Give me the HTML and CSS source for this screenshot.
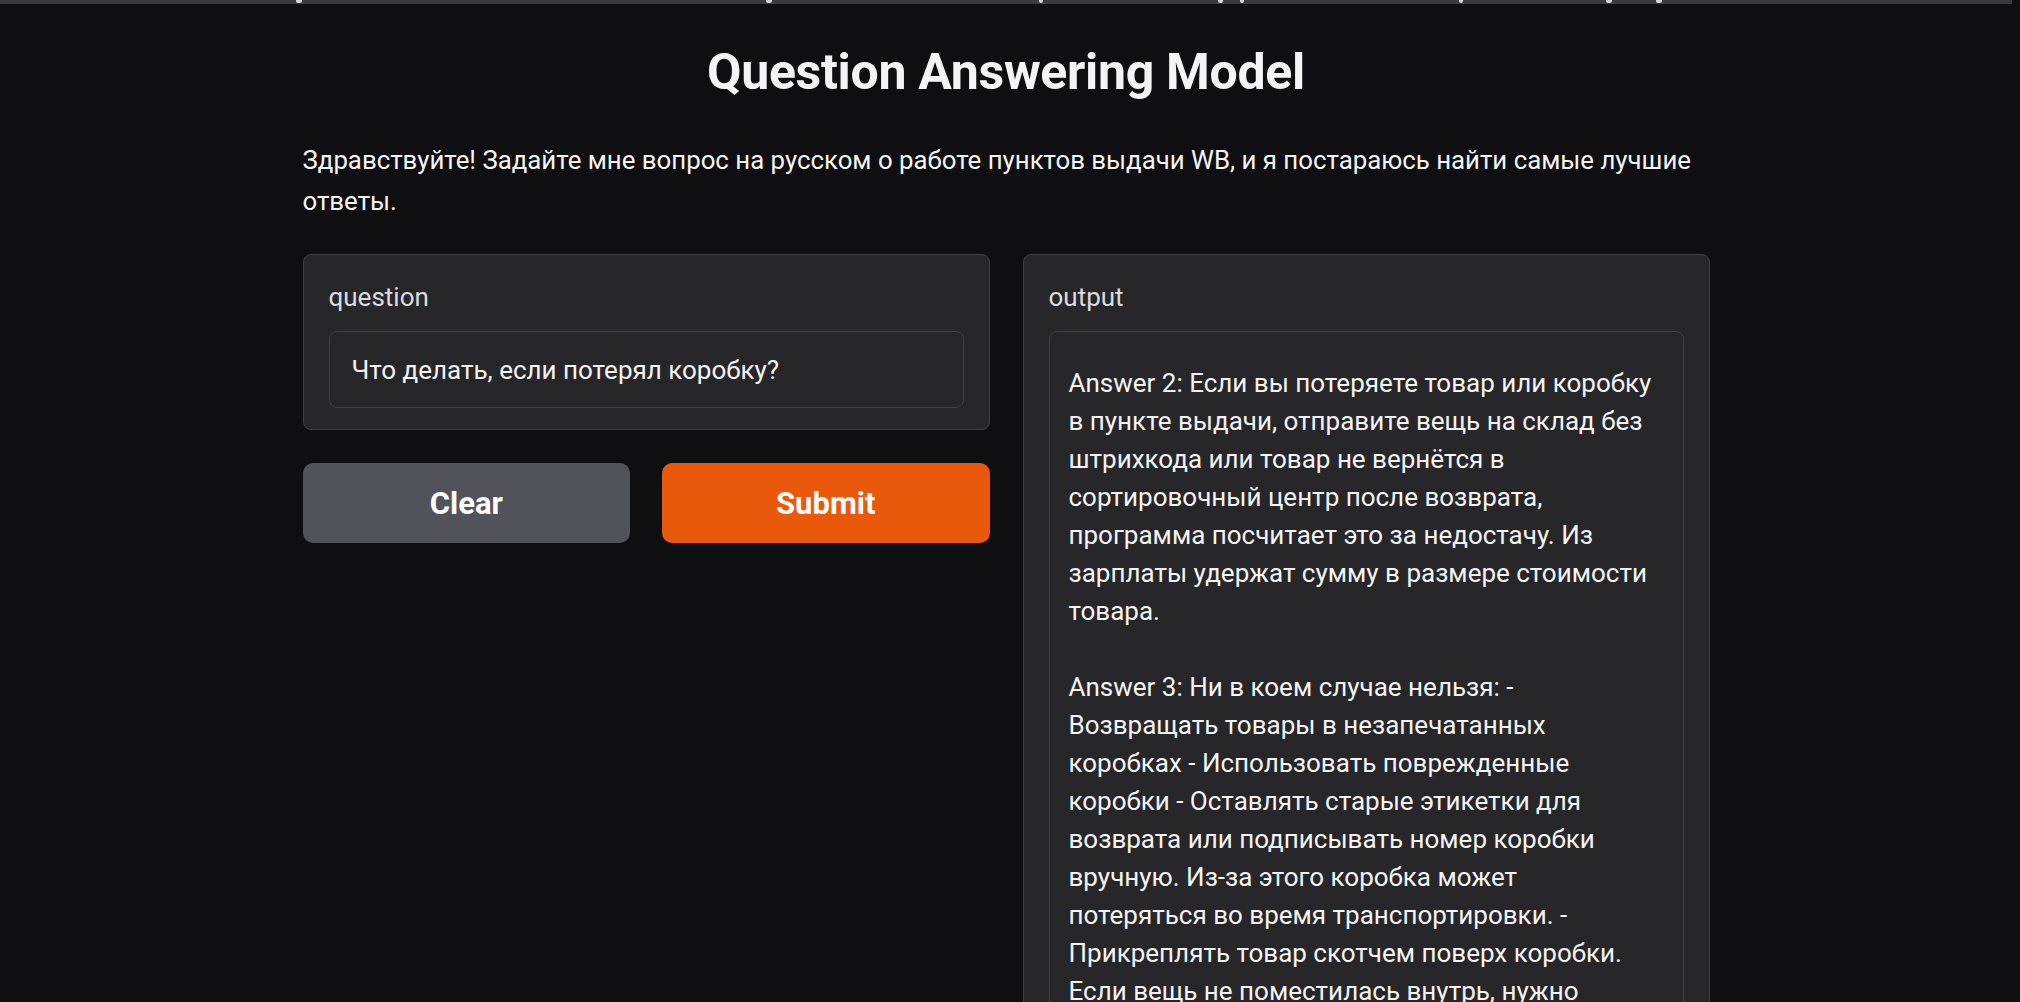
FILE: index.html
```html
<!DOCTYPE html>
<html lang="ru">
<head>
<meta charset="utf-8">
<title>Question Answering Model</title>
<link rel="stylesheet" href="styles.css">
</head>
<body>
<div class="topbar">
  <span class="mark m1"></span><span class="mark m2"></span><span class="mark m3"></span><span class="mark m4"></span><span class="mark m5"></span><span class="mark m6"></span><span class="mark m7"></span><span class="mark m8"></span>
</div>
<main class="app">
  <h1 class="title">Question Answering Model</h1>
  <p class="intro">Здравствуйте! Задайте мне вопрос на русском о работе пунктов выдачи WB, и я постараюсь найти самые лучшие ответы.</p>
  <div class="columns">
    <div class="col">
      <div class="card">
        <div class="label">question</div>
        <div class="input">Что делать, если потерял коробку?</div>
      </div>
      <div class="buttons">
        <button class="btn btn-clear">Clear</button>
        <button class="btn btn-submit">Submit</button>
      </div>
    </div>
    <div class="col">
      <div class="card card-out">
        <div class="label">output</div>
        <div class="output">
          <div class="line">Answer 2: Если вы потеряете товар или коробку</div>
          <div class="line">в пункте выдачи, отправите вещь на склад без</div>
          <div class="line">штрихкода или товар не вернётся в</div>
          <div class="line">сортировочный центр после возврата,</div>
          <div class="line">программа посчитает это за недостачу. Из</div>
          <div class="line">зарплаты удержат сумму в размере стоимости</div>
          <div class="line">товара.</div>
          <div class="line">&nbsp;</div>
          <div class="line">Answer 3: Ни в коем случае нельзя: -</div>
          <div class="line">Возвращать товары в незапечатанных</div>
          <div class="line">коробках - Использовать поврежденные</div>
          <div class="line">коробки - Оставлять старые этикетки для</div>
          <div class="line">возврата или подписывать номер коробки</div>
          <div class="line">вручную. Из-за этого коробка может</div>
          <div class="line">потеряться во время транспортировки. -</div>
          <div class="line">Прикреплять товар скотчем поверх коробки.</div>
          <div class="line">Если вещь не поместилась внутрь, нужно</div>
        </div>
      </div>
    </div>
  </div>
</main>
</body>
</html>
```
FILE: styles.css
```css
* { box-sizing: border-box; }
html, body { margin: 0; padding: 0; }
body {
  background: #0f0f11;
  color: #f4f4f5;
  font-family: Roboto, "Noto Sans", sans-serif;
  height: 1002px;
  overflow: hidden;
  padding-right: 8px;
}
.topbar {
  height: 4px;
  background: #3c3c3c;
  position: relative;
}
.mark {
  position: absolute;
  top: 0;
  width: 6px;
  height: 3px;
  background: #d8d8d8;
  border-radius: 0 0 2px 2px;
}
.m1 { left: 296px; }
.m2 { left: 766px; }
.m3 { left: 1039px; width: 4px; }
.m4 { left: 1218px; width: 5px; }
.m5 { left: 1240px; width: 4px; }
.m6 { left: 1459px; width: 4px; }
.m7 { left: 1606px; }
.m8 { left: 1656px; }
.app {
  width: 1407px;
  margin: 0 auto;
}
.title {
  margin: 0;
  padding-top: 38px;
  font-size: 50px;
  line-height: 60px;
  font-weight: 700;
  text-align: center;
  letter-spacing: -0.3px;
}
.intro {
  margin: 38px 0 0;
  font-size: 25.8px;
  line-height: 41px;
}
.columns {
  display: grid;
  grid-template-columns: 1fr 1fr;
  gap: 33px;
  margin-top: 32px;
  align-items: start;
}
.col { display: flex; flex-direction: column; gap: 33px; }
.card {
  background: #27272a;
  border: 1px solid #3f3f46;
  border-radius: 8px;
  padding: 24px 25px 21px;
}
.label {
  font-size: 26px;
  line-height: 36px;
  color: #dcdce0;
  margin-bottom: 16px;
}
.input {
  height: 77px;
  border: 1px solid #3f3f46;
  border-radius: 8px;
  background: #27272a;
  padding: 0 22px;
  display: flex;
  align-items: center;
  font-size: 26px;
  color: #f4f4f5;
}
.buttons {
  display: grid;
  grid-template-columns: 1fr 1fr;
  gap: 32px;
}
.btn {
  height: 80px;
  border: none;
  border-radius: 10px;
  color: #ffffff;
  font-family: Roboto, "Noto Sans", sans-serif;
  font-weight: 700;
  font-size: 31px;
}
.btn-clear { background: #52525b; }
.btn-submit { background: #ea580c; }
.card-out { height: 900px; }
.output {
  border: 1px solid #3f3f46;
  border-radius: 8px;
  padding: 32px 19px 0;
  height: 800px;
  font-size: 26px;
  line-height: 38px;
  color: #f4f4f5;
}
.line { white-space: nowrap; }
```
